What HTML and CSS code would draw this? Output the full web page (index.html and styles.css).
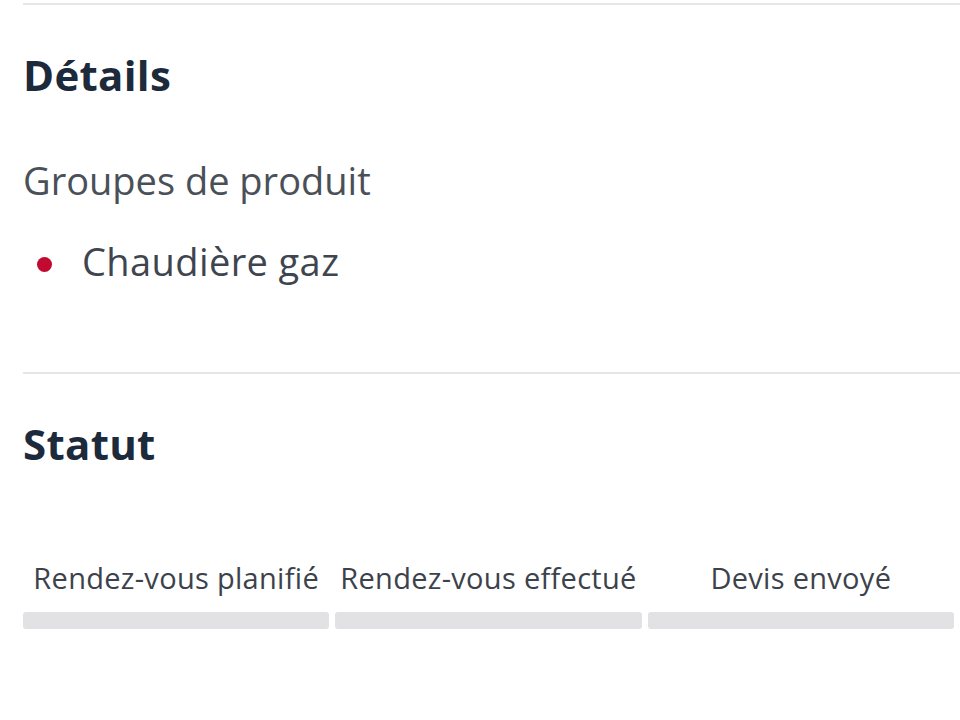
FILE: index.html
```html
<!DOCTYPE html>
<html lang="fr">
<head>
<meta charset="utf-8">
<title>Détails</title>
<link rel="stylesheet" href="styles.css">
</head>
<body>
<div class="page">
  <hr class="rule rule-top">
  <section class="details">
    <h2 class="heading heading-details">Détails</h2>
    <p class="label">Groupes de produit</p>
    <ul class="groups">
      <li class="group"><span class="dot"></span><span>Chaudière gaz</span></li>
    </ul>
  </section>
  <hr class="rule rule-mid">
  <section class="status">
    <h2 class="heading heading-status">Statut</h2>
    <div class="steps">
      <div class="step"><span class="step-label">Rendez-vous planifié</span><div class="bar"></div></div>
      <div class="step"><span class="step-label">Rendez-vous effectué</span><div class="bar"></div></div>
      <div class="step"><span class="step-label">Devis envoyé</span><div class="bar"></div></div>
    </div>
  </section>
</div>
</body>
</html>
```
FILE: styles.css
```css
html, body {
  margin: 0;
  padding: 0;
  background: #ffffff;
}
body {
  font-family: "Open Sans", "Noto Sans", sans-serif;
  width: 960px;
  height: 720px;
  overflow: hidden;
}
.page {
  padding: 3px 0 0 23px;
}
.rule {
  border: 0;
  height: 2px;
  background: #e6e6e8;
  margin: 0;
}
.heading {
  margin: 0;
  font-size: 42px;
  line-height: 48px;
  font-weight: 700;
  color: #1c2a3b;
  letter-spacing: 0.3px;
}
.heading-details {
  margin-top: 46px;
}
.label {
  margin: 58px 0 0;
  font-size: 38px;
  line-height: 46px;
  color: #4a5058;
}
.groups {
  list-style: none;
  margin: 35px 0 0;
  padding: 0;
}
.group {
  display: flex;
  align-items: center;
  font-size: 38px;
  line-height: 46px;
  color: #3f454e;
  letter-spacing: 0.4px;
}
.dot {
  width: 15px;
  height: 15px;
  border-radius: 50%;
  background: #c20a30;
  margin: 6px 30px 0 14px;
  flex: none;
}
.rule-mid {
  margin-top: 88px;
}
.heading-status {
  margin-top: 46px;
}
.steps {
  display: grid;
  grid-template-columns: repeat(3, 1fr);
  column-gap: 6px;
  margin: 92px 6px 0 0;
}
.step {
  display: flex;
  flex-direction: column;
  align-items: center;
}
.step-label {
  font-size: 29px;
  line-height: 36px;
  color: #3c424b;
  white-space: nowrap;
  letter-spacing: 0.3px;
}
.bar {
  align-self: stretch;
  height: 17px;
  margin-top: 16px;
  background: #e2e2e5;
  border-radius: 3px;
}
```
